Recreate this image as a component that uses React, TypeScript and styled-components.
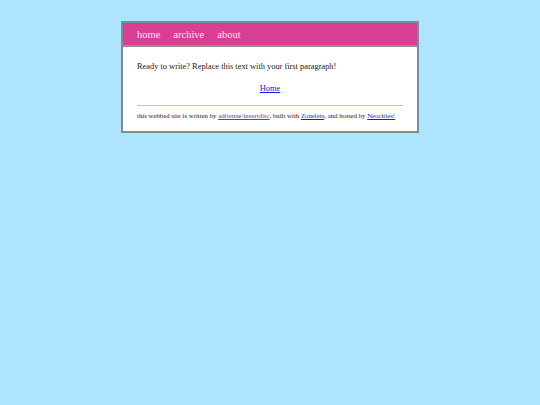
import styled, { createGlobalStyle } from "styled-components";

const GlobalStyle = createGlobalStyle`
  html, body {
    margin: 0;
    padding: 0;
    background: #aee4fd;
    font-family: "Liberation Serif", "DejaVu Serif", serif;
  }
`

const Page = styled.div`
  padding-top: 21px;
  display: flex;
  justify-content: center;
`

const Container = styled.div`
  width: 294px;
  border: 2px solid #7e8c98;
  background: #fff;
`

const Header = styled.nav`
  display: flex;
  align-items: center;
  gap: 13px;
  height: 22px;
  padding-left: 14px;
  background: #d83f93;
  border-bottom: 2px solid #8a8f9c;
`

const NavLink = styled.a`
  color: #fbe2f0;
  font-size: 10.5px;
  text-decoration: none;
`

const Content = styled.main`
  padding: 14px 14px 11px 14px;
`

const Paragraph = styled.p<{ center?: boolean }>`
  margin: 0 0 10px 0;
  font-size: 8.4px;
  line-height: 12px;
  color: #222;
  text-align: ${props => (props.center ? "center" : "left")};
`

const Link = styled.a<{ visited?: boolean }>`
  color: ${props => (props.visited ? "#6b3a9a" : "#1a1adb")};
  text-decoration: underline;
`

const Rule = styled.hr`
  margin: 0 0 5px 0;
  border: 0;
  border-top: 1px solid #c9c1ae;
`

const Footer = styled.footer`
  font-size: 6.8px;
  line-height: 9px;
  color: #222;
`

const App = () => {
    return <>
        <GlobalStyle/>
        <Page>
            <Container>
                <Header>
                    <NavLink href="#">home</NavLink>
                    <NavLink href="#">archive</NavLink>
                    <NavLink href="#">about</NavLink>
                </Header>
                <Content>
                    <Paragraph>
                        Ready to write? Replace this text with your first paragraph!
                    </Paragraph>
                    <Paragraph center>
                        <Link href="#">Home</Link>
                    </Paragraph>
                    <Rule/>
                    <Footer>
                        this webbed site is written by <Link href="#" visited>adrienne/insertdisc</Link>,
                        built with <Link href="#">Zonelets</Link>, and hosted by <Link href="#">Neocities!</Link>
                    </Footer>
                </Content>
            </Container>
        </Page>
    </>
}

export default App;
